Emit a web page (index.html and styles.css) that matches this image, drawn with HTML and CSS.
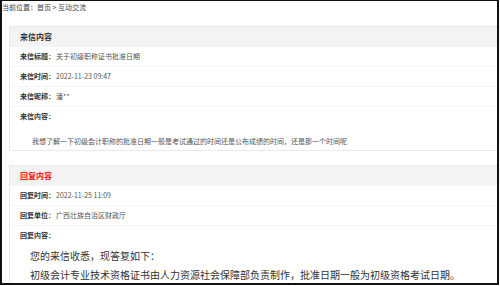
FILE: index.html
```html
<!DOCTYPE html>
<html lang="zh-CN">
<head>
<meta charset="utf-8">
<title>互动交流</title>
<link rel="stylesheet" href="styles.css">
</head>
<body>
<div class="frame">
  <div class="crumb">当前位置：首页 &gt; 互动交流</div>

  <section class="card">
    <div class="card-head">来信内容</div>
    <div class="row"><span class="label">来信标题：</span><span class="value">关于初级职称证书批准日期</span></div>
    <div class="row"><span class="label">来信时间：</span><span class="value">2022-11-23 09:47</span></div>
    <div class="row"><span class="label">来信昵称：</span><span class="value">潘**</span></div>
    <div class="row last"><span class="label">来信内容：</span></div>
    <div class="content">我想了解一下初级会计职称的批准日期一般是考试通过的时间还是公布成绩的时间，还是那一个时间呢</div>
  </section>

  <section class="card reply">
    <div class="card-head red">回复内容</div>
    <div class="row"><span class="label">回复时间：</span><span class="value">2022-11-25 11:09</span></div>
    <div class="row"><span class="label">回复单位：</span><span class="value">广西壮族自治区财政厅</span></div>
    <div class="row last"><span class="label">回复内容：</span></div>
    <div class="answer">
      <p>您的来信收悉，现答复如下：</p>
      <p>初级会计专业技术资格证书由人力资源社会保障部负责制作，批准日期一般为初级资格考试日期。</p>
    </div>
  </section>
</div>
</body>
</html>
```

FILE: styles.css
```css
* { box-sizing: border-box; }
html, body { margin: 0; padding: 0; background: #fff; }
body {
  font-family: "Noto Sans CJK SC", "Noto Sans", "Liberation Sans", sans-serif;
  color: #333;
}
.frame {
  width: 499px;
  height: 285px;
  border: 2px solid #111;
  border-top-width: 1px;
  overflow: hidden;
  background: #fff;
}
.crumb {
  font-size: 7px;
  line-height: 13px;
  color: #444;
  padding-left: 0;
}
.card {
  margin: 12px 0 0 7px;
  width: 520px;
  border: 1px solid #e9e9e9;
}
.card.reply { margin-top: 14px; }
.card-head {
  background: #f3f3f3;
  height: 20px;
  line-height: 20px;
  padding-left: 10px;
  font-size: 8px;
  font-weight: bold;
  color: #333;
}
.card-head.red { color: #f0141e; }
.row {
  height: 20px;
  line-height: 19px;
  padding-left: 10px;
  border-bottom: 1px solid #f4f4f4;
  font-size: 7px;
  display: flex;
  gap: 1px;
}
.row.last { border-bottom: none; }
.label { font-weight: bold; color: #333; }
.value { color: #555; }
.content {
  font-size: 7px;
  line-height: 12px;
  color: #555;
  padding: 8px 0 3px 22px;
}
.answer {
  padding: 0 0 0 20px;
  font-size: 10px;
  line-height: 19px;
  color: #333;
}
.answer p { margin: 0; white-space: nowrap; }
```
